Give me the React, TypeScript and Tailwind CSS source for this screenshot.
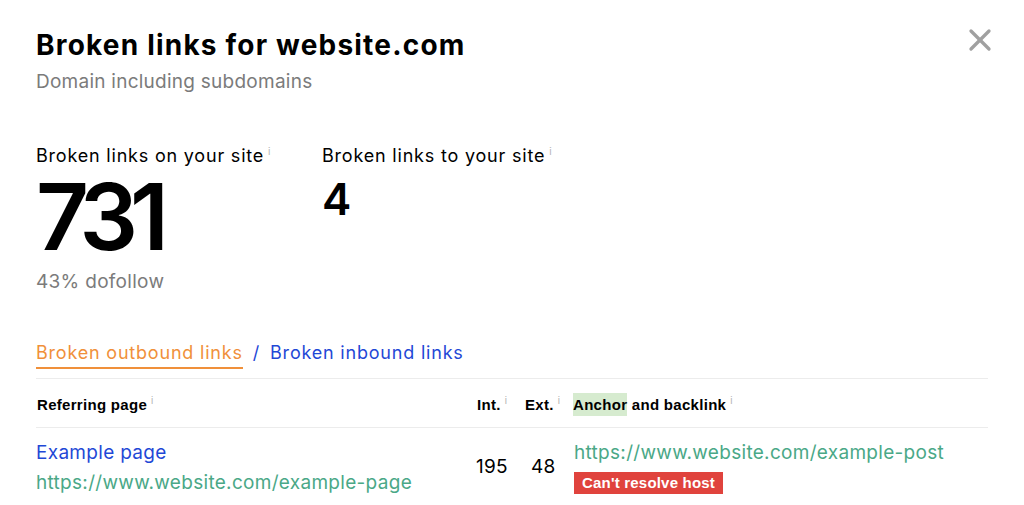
import { X } from "lucide-react";

const info = <span className="ml-1 align-super text-[10px] font-normal tracking-normal text-[#b5b5b5]">i</span>;

export default function App() {
  return (
    <div className="relative h-[505px] w-[1024px] overflow-hidden bg-white px-9 pt-[27px] font-['Inter',sans-serif] text-black">
      <button className="absolute right-[26px] top-[22px] text-[#a0a0a0]">
        <X className="h-9 w-9" strokeWidth={2.2} />
      </button>

      <h1 className="text-[28px] font-bold leading-[36px] tracking-[1.2px]">Broken links for website.com</h1>
      <p className="mt-[7px] text-[19px] leading-[24px] tracking-[0.25px] text-[#7b7b7b]">Domain including subdomains</p>

      <div className="mt-[45px] flex">
        <div className="w-[286px]">
          <div className="text-[18px] leading-[24px] tracking-[0.8px]">Broken links on your site{info}</div>
          <div className="mt-[14px] text-[92px] font-semibold leading-[70px] tracking-[-8px]">731</div>
          <div className="mt-[18px] text-[19px] leading-[24px] tracking-[0.3px] text-[#7b7b7b]">43% dofollow</div>
        </div>
        <div>
          <div className="text-[18px] leading-[24px] tracking-[0.8px]">Broken links to your site{info}</div>
          <div className="mt-[9px] text-[44px] font-semibold leading-[44px]">4</div>
        </div>
      </div>

      <div className="mt-[47px] flex items-start text-[18px] leading-[24px] tracking-[0.8px]">
        <span className="border-b-2 border-[#f0903a] pb-[2px] text-[#f0903a]">Broken outbound links</span>
        <span className="mx-[10px] text-[#1f48d6]">/</span>
        <span className="text-[#1f48d6]">Broken inbound links</span>
      </div>

      <div className="mt-[9px] border-t border-[#ececec]">
        <div className="flex h-[49px] items-center border-b border-[#ececec] pt-[3px] font-['Liberation_Sans',sans-serif] text-[15px] font-bold tracking-[0.3px]">
          <div className="w-[441px] pl-px">Referring page{info}</div>
          <div className="w-[48px]">Int.{info}</div>
          <div className="w-[48px]">Ext.{info}</div>
          <div>
            <span className="bg-[#d6ebcf] py-[3px]">Anchor</span> and backlink{info}
          </div>
        </div>

        <div className="flex pt-[10px] text-[19px] tracking-[0.3px]">
          <div className="w-[440px] leading-[30px]">
            <div className="text-[#1f48d6]">Example page</div>
            <div className="text-[#4aa887]">https://www.website.com/example-page</div>
          </div>
          <div className="w-[55px] pt-[14px] leading-[30px]">195</div>
          <div className="w-[43px] pt-[14px] leading-[30px]">48</div>
          <div>
            <div className="leading-[30px] text-[#4aa887]">https://www.website.com/example-post</div>
            <span className="mt-[1px] inline-block bg-[#e0433d] px-[8px] font-['Liberation_Sans',sans-serif] text-[15px] font-bold leading-[22px] tracking-[0.2px] text-white">
              Can't resolve host
            </span>
          </div>
        </div>
      </div>
    </div>
  );
}
